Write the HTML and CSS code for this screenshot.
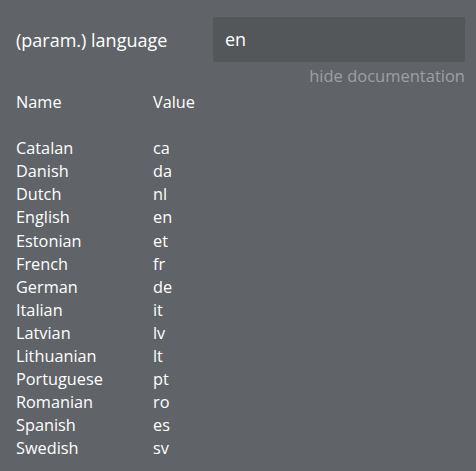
FILE: index.html
```html
<!DOCTYPE html>
<html>
<head>
<meta charset="utf-8">
<link rel="stylesheet" href="styles.css">
</head>
<body>
<div class="panel">
  <div class="param-row">
    <div class="param-label">(param.) language</div>
    <div class="param-input">en</div>
  </div>
  <div class="doc-link">hide documentation</div>
  <div class="table">
    <div class="row head"><span class="name">Name</span><span class="value">Value</span></div>
    <div class="row spacer"></div>
    <div class="row"><span class="name">Catalan</span><span class="value">ca</span></div>
    <div class="row"><span class="name">Danish</span><span class="value">da</span></div>
    <div class="row"><span class="name">Dutch</span><span class="value">nl</span></div>
    <div class="row"><span class="name">English</span><span class="value">en</span></div>
    <div class="row"><span class="name">Estonian</span><span class="value">et</span></div>
    <div class="row"><span class="name">French</span><span class="value">fr</span></div>
    <div class="row"><span class="name">German</span><span class="value">de</span></div>
    <div class="row"><span class="name">Italian</span><span class="value">it</span></div>
    <div class="row"><span class="name">Latvian</span><span class="value">lv</span></div>
    <div class="row"><span class="name">Lithuanian</span><span class="value">lt</span></div>
    <div class="row"><span class="name">Portuguese</span><span class="value">pt</span></div>
    <div class="row"><span class="name">Romanian</span><span class="value">ro</span></div>
    <div class="row"><span class="name">Spanish</span><span class="value">es</span></div>
    <div class="row"><span class="name">Swedish</span><span class="value">sv</span></div>
  </div>
</div>
</body>
</html>
```
FILE: styles.css
```css
html, body {
  margin: 0;
  padding: 0;
  background: #606468;
  width: 476px;
  height: 471px;
  overflow: hidden;
}
.panel {
  font-family: "Open Sans", "DejaVu Sans", sans-serif;
  color: #ffffff;
  padding: 17px 11px 0 16px;
}
.param-row {
  display: flex;
  align-items: center;
  height: 45px;
}
.param-label {
  width: 197px;
  font-size: 18px;
}
.param-input {
  flex: 1;
  height: 45px;
  background: #53575a;
  border-radius: 2px;
  box-sizing: border-box;
  padding-left: 12px;
  font-size: 18px;
  line-height: 45px;
}
.doc-link {
  text-align: right;
  font-size: 16.5px;
  color: #9ca0a3;
  margin-top: 2px;
  line-height: 24px;
}
.table {
  margin-top: 3px;
}
.row {
  display: flex;
  font-size: 16.3px;
  line-height: 23.1px;
  height: 23.1px;
}
.name {
  width: 137px;
}
```
